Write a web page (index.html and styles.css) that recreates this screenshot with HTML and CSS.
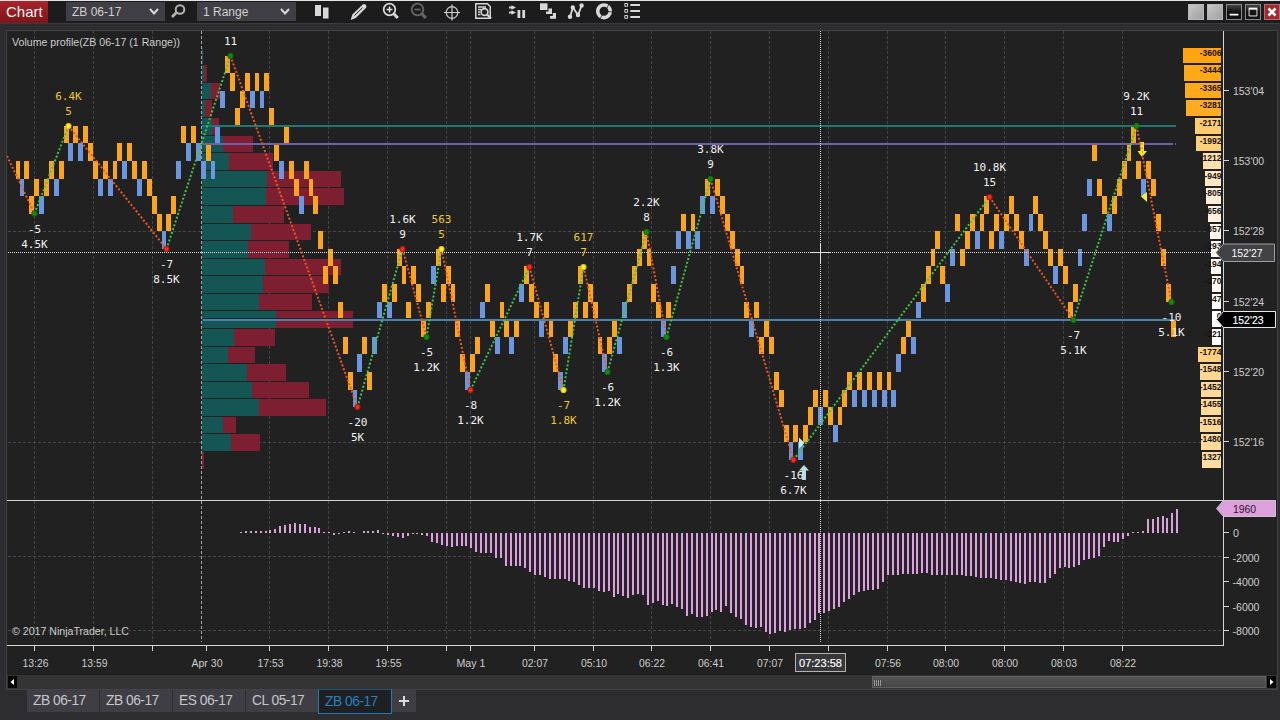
FILE: index.html
```html
<!DOCTYPE html>
<html lang="en">
<head>
<meta charset="utf-8">
<title>Chart</title>
<link rel="stylesheet" href="styles.css">
</head>
<body>
<div class="window">
  <header class="toolbar">
    <div class="title">Chart</div>
    <div class="combo combo-first"><span>ZB 06-17</span><svg class="chevron" viewBox="0 0 10 7"><path d="M1 1l4 4.4L9 1"/></svg></div>
    <svg class="icon search" viewBox="0 1 20 22"><circle cx="12" cy="9.500" r="4.300" fill="none" stroke="#b4b4b4" stroke-width="2"/><path d="M8.500 12.500L4 17" stroke="#b4b4b4" stroke-width="2.600"/></svg>
    <div class="combo"><span>1 Range</span><svg class="chevron" viewBox="0 0 10 7"><path d="M1 1l4 4.4L9 1"/></svg></div>
    <svg class="icon bars" viewBox="0 1 20 22"><path fill="#d8d8d8" d="M3 5h6v11H3zM11 7.500h5.500v11H11z"/></svg>
    <svg class="icon pencil" viewBox="0 1 20 22"><path fill="#d8d8d8" d="M1.700 20l1.600-5.500L13.500 4.700q1.500-1.400 3.200 0t.2 3.300L6.800 18z"/><path d="M5.500 15.500l8-7.700" stroke="#222" stroke-width="1"/></svg>
    <svg class="icon zoom-in" viewBox="0 1 20 22"><g fill="none" stroke="#d8d8d8"><circle cx="9.500" cy="9.500" r="5.800" stroke-width="1.800"/><path d="M6.500 9.500h6M9.500 6.500v6" stroke-width="1.700"/><path d="M13.500 13.500l4.300 4.500" stroke-width="3"/></g></svg>
    <svg class="icon zoom-out" viewBox="0 1 20 22"><g fill="none" stroke="#676767"><circle cx="9.500" cy="9.500" r="5.800" stroke-width="1.800"/><path d="M6.500 9.500h6" stroke-width="1.700"/><path d="M13.500 13.500l4.300 4.500" stroke-width="3"/></g></svg>
    <svg class="icon cross" viewBox="0 1 20 22"><g fill="none" stroke="#d0d0d0" stroke-width="1.200"><circle cx="10" cy="12.500" r="5.800"/><path d="M2 12.500h16M10 4.500v16"/></g></svg>
    <svg class="icon doc" viewBox="0 1 20 22"><g fill="none" stroke="#d8d8d8"><path d="M14.500 3.800H2.800v14.400h14.400V6.500zM5 7h8M5 9.500h3M5 12h2M5 14.500h2.500" stroke-width="1.500"/><circle cx="11.500" cy="12" r="3.400" fill="#222" stroke-width="1.600"/><path d="M14 14.500l4 4" stroke-width="2.200"/></g></svg>
    <svg class="icon flow" viewBox="0 1 20 22"><path fill="#d8d8d8" d="M2 6.500h2.500V5.200L9 7.500 4.500 9.800V8.500H2zM2 11.500h2.500v-1.300L9 12.500l-4.500 2.300v-1.300H2zM10.500 10h2.800v8h-2.800zM15.300 10h2.800v8h-2.800z"/></svg>
    <svg class="icon blocks" viewBox="0 1 20 22"><path fill="#d8d8d8" d="M2 3.300h7.500V10H2z"/><path fill="#d8d8d8" d="M10.500 8.500H14V14H8v-2.500h2.500zM14.800 13H18v5.700h-6V16h2.800z"/></svg>
    <svg class="icon zigzag" viewBox="0 1 20 22"><path d="M4 16.700L7 7.500l5 7.500 3.500-9" fill="none" stroke="#d8d8d8" stroke-width="1.800"/><g fill="#d8d8d8"><circle cx="4" cy="16.700" r="2.200"/><circle cx="6.800" cy="7.500" r="2.200"/><circle cx="12" cy="15" r="2.200"/><circle cx="15.600" cy="5.500" r="2.200"/></g></svg>
    <svg class="icon ring" viewBox="0 1 20 22"><circle cx="10" cy="11.300" r="6.300" fill="none" stroke="#d8d8d8" stroke-width="3.600"/><path d="M15 4l-2 4M18 12l-4-.5M6 19l2-4" stroke="#222" stroke-width=".8"/></svg>
    <svg class="icon list" viewBox="0 1 20 22"><path d="M2.800 3.500h2.800v2.800H2.800zM2.800 9.500h2.800v2.800H2.800zM2.800 15.500h2.800v2.800H2.800z" fill="none" stroke="#d8d8d8"/><path d="M8.300 5H18M8.300 11H18M8.300 17H18" stroke="#d8d8d8" stroke-width="1.800"/></svg>
    <div class="controls">
      <i class="ctl pale"></i><i class="ctl pale"></i>
      <i class="ctl"><svg viewBox="0 0 16 16"><path d="M3 11h10" stroke="#fff" stroke-width="2"/></svg></i>
      <i class="ctl"><svg viewBox="0 0 16 16"><path d="M3.500 4.500h9v8h-9z" fill="none" stroke="#fff"/><path d="M3 4h10" stroke="#fff" stroke-width="2"/></svg></i>
      <i class="ctl close"><svg viewBox="0 0 16 16"><path d="M4 4l8 8M12 4l-8 8" stroke="#fff" stroke-width="3"/></svg></i>
    </div>
  </header>
  <main class="panel">
    <svg id="chart" class="chart" viewBox="7 31 1270 644"></svg>
    <div class="scroll">
      <span class="arrow"><svg viewBox="0 0 9 12"><path d="M6 3v6L2.500 6z" fill="#fff"/></svg></span>
      <span class="track"><span class="thumb"></span></span>
      <span class="arrow"><svg viewBox="0 0 9 12"><path d="M3 3v6l3.500-3z" fill="#fff"/></svg></span>
    </div>
  </main>
  <nav class="tabs">
    <span class="tab">ZB 06-17</span><span class="tab">ZB 06-17</span><span class="tab">ES 06-17</span><span class="tab">CL 05-17</span><span class="tab active">ZB 06-17</span><span class="add"><svg viewBox="0 0 12 12"><path d="M1 6h10M6 1v10" stroke="#dcdcdc" stroke-width="2"/></svg></span>
  </nav>
</div>
<script src="chart.js"></script>
</body>
</html>
```
FILE: styles.css
```css
* { box-sizing: border-box; }
body { margin: 0; background: #2d2d30; font-family: "Liberation Sans", Arial, sans-serif; overflow: hidden; }
.window { width: 1280px; height: 720px; display: flex; flex-direction: column; border-top: 1px solid #e4e4e4; }
.toolbar { height: 23px; flex: none; display: flex; align-items: flex-start; background: #1c1c1c; border-bottom: 1px solid #3b3b3d; }
.title { width: 48px; height: 22px; background: linear-gradient(#a8242b, #7f1419); color: #f4f4f4; font-size: 15px; line-height: 22px; padding-left: 6px; }
.combo { width: 99px; height: 19px; margin: 1px 0 0 9px; padding: 0 6px; background: #3f3f45; color: #d0d0d0; font-size: 12px; display: flex; align-items: center; justify-content: space-between; }
.combo-first { margin-left: 18px; }
.chevron { width: 10px; height: 7px; }
.chevron path { fill: none; stroke: #d8d8d8; stroke-width: 2; }
.icon { width: 20px; height: 22px; flex: none; }
.search { margin-left: 3px; }
.bars { margin-left: 16px; }
.pencil { margin-left: 17px; }
.zoom-in, .doc, .blocks { margin-left: 11px; }
.zoom-out, .zigzag, .ring, .list { margin-left: 8px; }
.cross, .flow { margin-left: 14px; }
.controls { display: flex; gap: 3px; margin: 3px 0 0 auto; }
.ctl { width: 16px; height: 16px; background: linear-gradient(#444, #111 50%); border: 1px solid #8a8a8a; display: flex; }
.ctl svg { width: 14px; height: 14px; }
.pale { background: linear-gradient(135deg, #c8c8c8, #a0a0a0); border-color: #b8b8b8; }
.close { background: #a02a33; border-color: #b86b70; }
.panel { width: 1272px; height: 660px; flex: none; margin: 6px 0 0 6px; border: 1px solid #424244; background: #212121; display: flex; flex-direction: column; }
.chart { width: 1270px; height: 644px; flex: none; display: block; }
.scroll { height: 14px; display: flex; align-items: center; background: #343435; padding: 0 1px; gap: 1px; }
.arrow { width: 9px; height: 12px; background: #050505; display: flex; }
.arrow svg { width: 9px; height: 12px; }
.track { flex: 1; height: 12px; display: flex; justify-content: flex-end; }
.thumb { width: 394px; height: 12px; background: repeating-linear-gradient(90deg, #999 0 1px, #444 1px 2px) 1px 3px / 7px 6px no-repeat, linear-gradient(#555, #464646); border: 1px solid #606060; }
.tabs { display: flex; align-items: flex-start; margin-left: 27px; gap: 1px; font-size: 13.800px; color: #c6c6ca; }
.tab { width: 72px; height: 22px; line-height: 22px; padding-left: 6px; background: #3e3e44; letter-spacing: -.5px; }
.active { width: 74px; height: 25px; margin: -1px -1px 0 -1px; line-height: 24px; background: #202022; border: 1px solid #2478b4; border-top-color: #25506e; color: #2580bd; }
.add { width: 24px; height: 22px; background: #3e3e44; display: flex; align-items: center; justify-content: center; }
.add svg { width: 12px; height: 12px; }
.crisp { shape-rendering: crispEdges; }
.grid { stroke: #464648; stroke-dasharray: 3 2; }
.dotted { stroke: #dcdcdc; stroke-dasharray: 1 1; }
.mono { font: 11px "DejaVu Sans Mono", monospace; text-anchor: middle; fill: #f2f2f2; }
.mono.warn { fill: #ecc92f; }
.axis { font-size: 11px; fill: #cdcdcd; }
.delta { font-size: 8.500px; font-weight: bold; text-anchor: end; fill: #17130d; }
.bright { fill: #fff; }
.strong { fill: #fff; stroke: #fff; stroke-width: .15; }
.dark { fill: #221a22; }
```
FILE: chart.js
```js
const svg = document.getElementById('chart');
const NS = 'http://www.w3.org/2000/svg';
function add(tag, attrs, text) {
  const e = document.createElementNS(NS, tag);
  for (const k in attrs) e.setAttribute(k, attrs[k]);
  if (text !== undefined) e.textContent = text;
  svg.appendChild(e);
}
const rect = (x, y, width, height, fill) => add('rect', { x, y, width, height, fill, class: 'crisp' });
const line = (x1, y1, x2, y2, attrs) => add('line', Object.assign({ x1, y1, x2, y2 }, attrs));
const label = (x, y, s, w, attrs) => add('text', Object.assign({ x, y, class: 'axis', textLength: w, lengthAdjust: 'spacingAndGlyphs' }, attrs), s);
const level = r => 55.5 + 17.58 * r;

/* grid */
const columns = [34, 93, 152, 269, 328, 387, 446, 470, 534, 593, 651, 710, 769, 828, 887, 945, 1004, 1063, 1122];
columns.forEach(x => line(x + .5, 31, x + .5, 642, { class: 'grid' }));
[231.5, 442.5, 556.5, 630.5].forEach(y => line(8, y, 1223, y, { class: 'grid' }));

/* volume profile: [bid end, total end] */
const profile = [[203, 203], [204, 207], [211, 220], [205, 212], [212, 219], [223, 253], [229, 273], [267, 341], [266, 344], [233, 284], [251, 311], [248, 289], [265, 341], [263, 329], [259, 312], [276, 353], [234, 275], [228, 255], [247, 286], [252, 309], [259, 326], [223, 236], [231, 260], [202, 204]];
profile.forEach(([a, b], i) => {
  const y = Math.round(level(i - .5)) + 1, h = Math.round(level(i + .5)) - y;
  rect(202, y, a - 202, h, '#145654');
  rect(a, y, b - a, h, '#7d1f31');
});
line(201.5, 31, 201.5, 642, { stroke: '#a8a8a8', 'stroke-dasharray': '3 2' });

/* candles: x, colour, price row */
const candles = `18o6 22b7 26.5o6 31.5o8 36.5o7 41.5b8 46.5o7 51.5o6 56.5b7 61.5o6 66.5o4 70.5b5 75.5o4 80.5b5 85.5o4 90.5o5 95.5o6 100.5b7 105.5o6 110.5b7 115o6 119.5o5 124.5b6 129.5o5 134.5o6 139.5b7 144.5o6 149.5o7 154.5o8 159.5o9 164b10 168.5o9 173.5o8 178.5b6 183.5o4 188.5b5 193.5o4 198.5b5 203.5b6 208.5o5 213b6 217.5b4 222.5b2 227.5o0 232.5o1 237.5o3 242.5o2 247.5o1 252.5b2 257o1 262b2 266.5o1 271.5o3 276.5o5 281.5b6 286.5o4 291.5o6 296.5o7 301.5b8 306.5o6 311o7 315.5o8 320.5o10
325.5o12 330.5o11 335.5o12 340.5o14 345.5o16 350.5o18 355b19 359.5b17 364.5o16 369.5o18 374.5b16 379.5b14 384.5o13 389.5b14 394.5o13 399.5o11 404o12 408.5o14 413.5o12 418.5o13 423.5o15 428.5o14 433.5b12 438.5o11 443.5o13 448.5o12 453o13 457.5o15 462.5o17 467.5b18 472.5o17 477.5o16 482.5b14 487.5o13 492.5o15 497.5b16 502o14 506.5o15 511.5b16 516.5o15
521.5b13 526.5o12 531.5o13 536.5o14 541.5b15 546.5o14 551o15 555.5o17 560.5b18 565.5b16 570.5o15 575.5o14 580.5o12 585.5o14 590.5o13 595.5o14 600o16 604.5b17 609.5o16 614.5o15 619.5b16 624.5b14 629.5o13 634.5o12 639.5o11 644.5o10 649o11 653.5o13 658.5o14 663.5b15 668.5o14 673.5b12 678.5b10 683.5o9 688.5b10 693o9 697.5b10 702.5b8 707.5o7 712.5b8 717.5o7 722.5o8 727.5o9 732.5o10 737.5o11 742o12
746.5o14 751.5b15 756.5o14 761.5o16 766.5o15 771.5o16 776.5o18 781.5o19 786.5o21 791b22 795.5o21 800.5b22 805.5o21 810.5o20 815.5o19 820.5b20 825.5o19 830.5o20 835.5b21 840o20 844.5o19 849.5o18 854.5b19 859.5o18 864.5b19 869.5o18 874.5b19 879.5o18 884.5b19 889o18 893.5b19 898.5b17 903.5o16 908.5o15 913.5b16 918.5b14 923.5o13 928.5o12 933o11 937.5o10 942.5o12 947.5b13 952.5b11 957.5o9 962.5o11 967.5o10 972.5o9 977.5b10 982o9 986.5o8 991.5o10 996.5o9 1001.5b10 1006.5o9 1011.5o8 1016.5o9 1021.5o10 1026.5b11 1031b9 1035.5o8 1040.5o9 1045.5o10 1050.5o11 1055.5b12 1060.5o11 1065.5o12 1070.5o14 1075.5o13 1080b11
1084.5b9 1089.5b7 1094.5o5 1099.5o7 1104.5o8 1109.5b9 1114.5o8 1119.5o7 1124.5o6 1129o5 1133.5o4 1138.5o6 1143.5b7 1148.5o6 1153.5o7 1158.5o9 1163.5o11 1168.5o13 1173.5o15`;
candles.split(/\s+/).forEach(c => {
  const [, x, k, r] = c.match(/([\d.]+)([ob])(\d+)/);
  const y = Math.round(level(+r)), y2 = Math.round(level(+r + 1));
  const width = x % 1 ? 5 : 4;
  rect(x - width / 2, y, width, y2 - y, k === 'o' ? '#fba51c' : '#6c97e0');
});

/* horizontal price levels */
rect(202, 125, 974, 2, '#197a73');
rect(202, 143, 971, 2, '#6f5fae');
rect(1175, 143, 1, 2, '#6f5fae');
rect(203, 318, 973, 1, '#182838');
rect(203, 319, 973, 2, '#5080a4');

/* crosshair */
line(8, 252.5, 1223, 252.5, { class: 'dotted crisp' });
line(820.5, 31, 820.5, 642, { class: 'dotted crisp' });
line(811, 252.5, 831, 252.5, { stroke: '#ddd' });
line(820.5, 243, 820.5, 263, { stroke: '#ddd' });

/* swings: x, y, marker colour, labels outward from the marker */
const swings = [[34.5, 213.5, 'g', '-5', '4.5K'], [68.5, 126, 'y', '5', '6.4K'], [166.5, 249, 'r', '-7', '8.5K'], [230.5, 56, 'g', '11'], [357.5, 407, 'r', '-20', '5K'], [402.5, 249, 'r', '9', '1.6K'], [426.5, 337, 'g', '-5', '1.2K'], [441.5, 249, 'y', '5', '563'], [470.5, 390, 'r', '-8', '1.2K'], [529.5, 267, 'r', '7', '1.7K'], [563.5, 390, 'y', '-7', '1.8K'], [583.5, 267, 'y', '7', '617'], [607.5, 372, 'g', '-6', '1.2K'], [646.5, 232, 'g', '8', '2.2K'], [666.5, 337, 'g', '-6', '1.3K'], [710.5, 179, 'g', '9', '3.8K'], [793.5, 460, 'r', '-16', '6.7K'], [989.5, 197, 'r', '15', '10.8K'], [1073.5, 320, 'g', '-7', '5.1K'], [1136.5, 126, 'g', '11', '9.2K'], [1171.5, 302, 'g', '-10', '5.1K']];
let px = 7, py = 156;
swings.forEach(([x, y]) => {
  line(px, py, x, y, { stroke: y < py ? '#3fc443' : '#f0561f', 'stroke-width': 2, 'stroke-dasharray': '2 2' });
  px = x; py = y;
});
const fills = { g: ['#178a12', '#0f6e10'], r: ['#f03018', '#b81414'], y: ['#fff040', '#e0c800'] };
swings.forEach(([x, y, c, near, far]) => {
  add('circle', { cx: x, cy: y, r: 2.5, fill: fills[c][0], stroke: fills[c][1], 'stroke-width': 1.2 });
  const low = near[0] === '-', cls = c === 'y' ? 'mono warn' : 'mono';
  const base = Math.round(y);
  add('text', { x, y: base + (low ? 19 : -11), class: cls }, near);
  if (far) add('text', { x, y: base + (low ? 34 : -26), class: cls }, far);
});

/* order markers */
add('path', { d: 'M1140.5 142h3.500v9h3l-5 6-4.500-6h3z', fill: '#ffe81c' });
line(1142, 143, 1142.5, 156, { stroke: '#d8761c', 'stroke-dasharray': '2 2' });
add('path', { d: 'M1141 196.500l6-4.500v10z', fill: '#f6ec3c' });
add('path', { d: 'M799 437.500v11l5.500-5.500z', fill: '#c4eef0' });
add('path', { d: 'M804 465l5 5.500h-3V480h-4v-9.500h-3z', fill: '#b4e0e4' });

/* oscillator */
const osc = [1,2,2,2,2,2,3,4,7,8,9,10,9,9,6,6,5,1,1,-2,-1,1,2,1,0,2,2,2,3,-1,-2,-3,-4,-5,-3,-1,-1,-2,-3,-9,-10,-12,-13,-14,-13,-13,-13,-15,-19,-20,-20,-20,-25,-25,-33,-33,-33,-33,-35,-39,-42,-42,-44,-46,-46,-46,-46,-48,-49,-52,-55,-55,-55,-58,-59,-58,-64,-61,-63,-65,-62,-61,-62,-72,-70,-68,-72,-73,-71,-74,-76,-83,-81,-84,-84,-83,-79,-77,-79,-73,-80,-84,-86,-92,-94,-95,-94,-99,-101,-100,-98,-99,-97,-96,-96,-95,-90,-87,-80,-80,-78,-76,-74,-69,-66,-62,-59,-58,-57,-57,-56,-49,-42,-42,-42,-41,-41,-41,-41,-40,-40,-42,-42,-42,-42,-42,-42,-42,-43,-43,-44,-45,-45,-45,-46,-47,-47,-48,-49,-50,-51,-49,-49,-50,-50,-45,-41,-35,-34,-35,-34,-32,-27,-26,-25,-23,-14,-8,-9,-9,-6,-3,1,1,2,14,14,16,17,15,20,24];
osc.forEach((v, i) => {
  const x = Math.round(240 + 4.902 * i);
  if (v < -5) rect(x - 2, 533, 5, -v, '#2a1f2d');
});
osc.forEach((v, i) => {
  const x = Math.round(240 + 4.902 * i);
  rect(x, v > 0 ? 533 - v : 533, 2, Math.abs(v), '#d8a3d6');
});
line(820.5, 501, 820.5, 642, { class: 'dotted crisp' });

/* delta per price */
const deltas = [['-3606', 1183, '#ffa60f'], ['-3444', 1184, '#ffa917'], ['-3365', 1185, '#ffaa1b'], ['-3281', 1186, '#ffac22'], ['-2171', 1195, '#ffca70'], ['-1992', 1196, '#ffcf7c'], ['-1212', 1203, '#ffdfae'], ['-949', 1205, '#ffe6c4'], ['-805', 1206, '#ffeed8'], ['-656', 1208, '#fff0df'], ['-357', 1210, '#fff6e9'], ['-293', 1211, '#fffaf4'], ['-194', 1211, '#fffaf6'], ['-170', 1212, '#fffaf6'], ['-47', 1212, '#fffdfb'], ['0', 1212, '#fff'], ['-121', 1212, '#fff'], ['-1774', 1198, '#ffd081'], ['-1548', 1200, '#ffd692'], ['-1452', 1201, '#ffd998'], ['-1455', 1201, '#ffd998'], ['-1516', 1200, '#ffd795'], ['-1480', 1201, '#ffd998'], ['-1327', 1202, '#ffdca0']];
deltas.forEach(([s, x, fill], i) => {
  const y = Math.round(level(i - .5)) + 1;
  rect(x, y, 1221 - x, Math.round(level(i + .5)) - y - 1, fill);
  add('text', { x: 1221.5, y: y + 8, class: 'delta' }, s);
});

/* axes */
line(7, 500.5, 1223, 500.5, { stroke: '#d4d4d4' });
line(7, 645.5, 1224, 645.5, { stroke: '#d4d4d4' });
line(1223.5, 31, 1223.5, 646, { stroke: '#d4d4d4' });
columns.concat(206).forEach(x => line(x + .5, 646, x + .5, 651, { stroke: '#d4d4d4' }));
["153'04", "153'00", "152'28", "152'24", "152'20", "152'16"].forEach((s, i) => {
  const y = Math.round(90.6 + 70.3 * i) - .5;
  line(1224, y, 1229, y, { stroke: '#d4d4d4' });
  label(1233, y + 4.5, s, 31);
});
['0', '-2000', '-4000', '-6000', '-8000'].forEach((s, i) => {
  const y = Math.floor(532.5 + 24.5 * i) + .5;
  line(1224, y, 1229, y, { stroke: '#d4d4d4' });
  label(i ? 1232.5 : 1233, y + 4, s, i ? 27 : 6);
});
const times = [['13:26', 35.5], ['13:59', 94.5], ['Apr 30', 207, 31], ['17:53', 270.5], ['19:38', 329.5], ['19:55', 388.5], ['May 1', 471, 29], ['02:07', 535], ['05:10', 594], ['06:22', 652], ['06:41', 711], ['07:07', 770], ['07:56', 888], ['08:00', 946], ['08:00', 1005], ['08:03', 1064], ['08:22', 1123]];
times.forEach(([s, x, w = 26]) => label(x, 667, s, w, { 'text-anchor': 'middle' }));

/* value tags */
add('path', { d: 'M1216 252.500L1223.500 244H1274.500V261.500H1223.500z', fill: '#414146', stroke: '#a0a0a0' });
label(1231.5, 257, "152'27", 31, { class: 'axis bright' });
add('path', { d: 'M1216.500 319.500L1223.500 311.500H1275.500V327.500H1223.500z', fill: '#000', stroke: '#e8e8e8' });
label(1232.5, 324, "152'23", 31, { class: 'axis strong' });
add('path', { d: 'M1216.500 508.500L1223.500 500.500H1275.500V516.500H1223.500z', fill: '#dda0dd', stroke: '#cfc0cf' });
label(1233, 513, '1960', 23, { class: 'axis dark' });
add('rect', { x: 795.5, y: 653.5, width: 50, height: 18, fill: '#37373a', stroke: '#b4b4b4' });
label(820.5, 667, '07:23:58', 43, { 'text-anchor': 'middle', class: 'axis strong' });

label(12, 46, 'Volume profile(ZB 06-17 (1 Range))', 168);
label(12, 635, '\u00a9 2017 NinjaTrader, LLC', 117);
```
